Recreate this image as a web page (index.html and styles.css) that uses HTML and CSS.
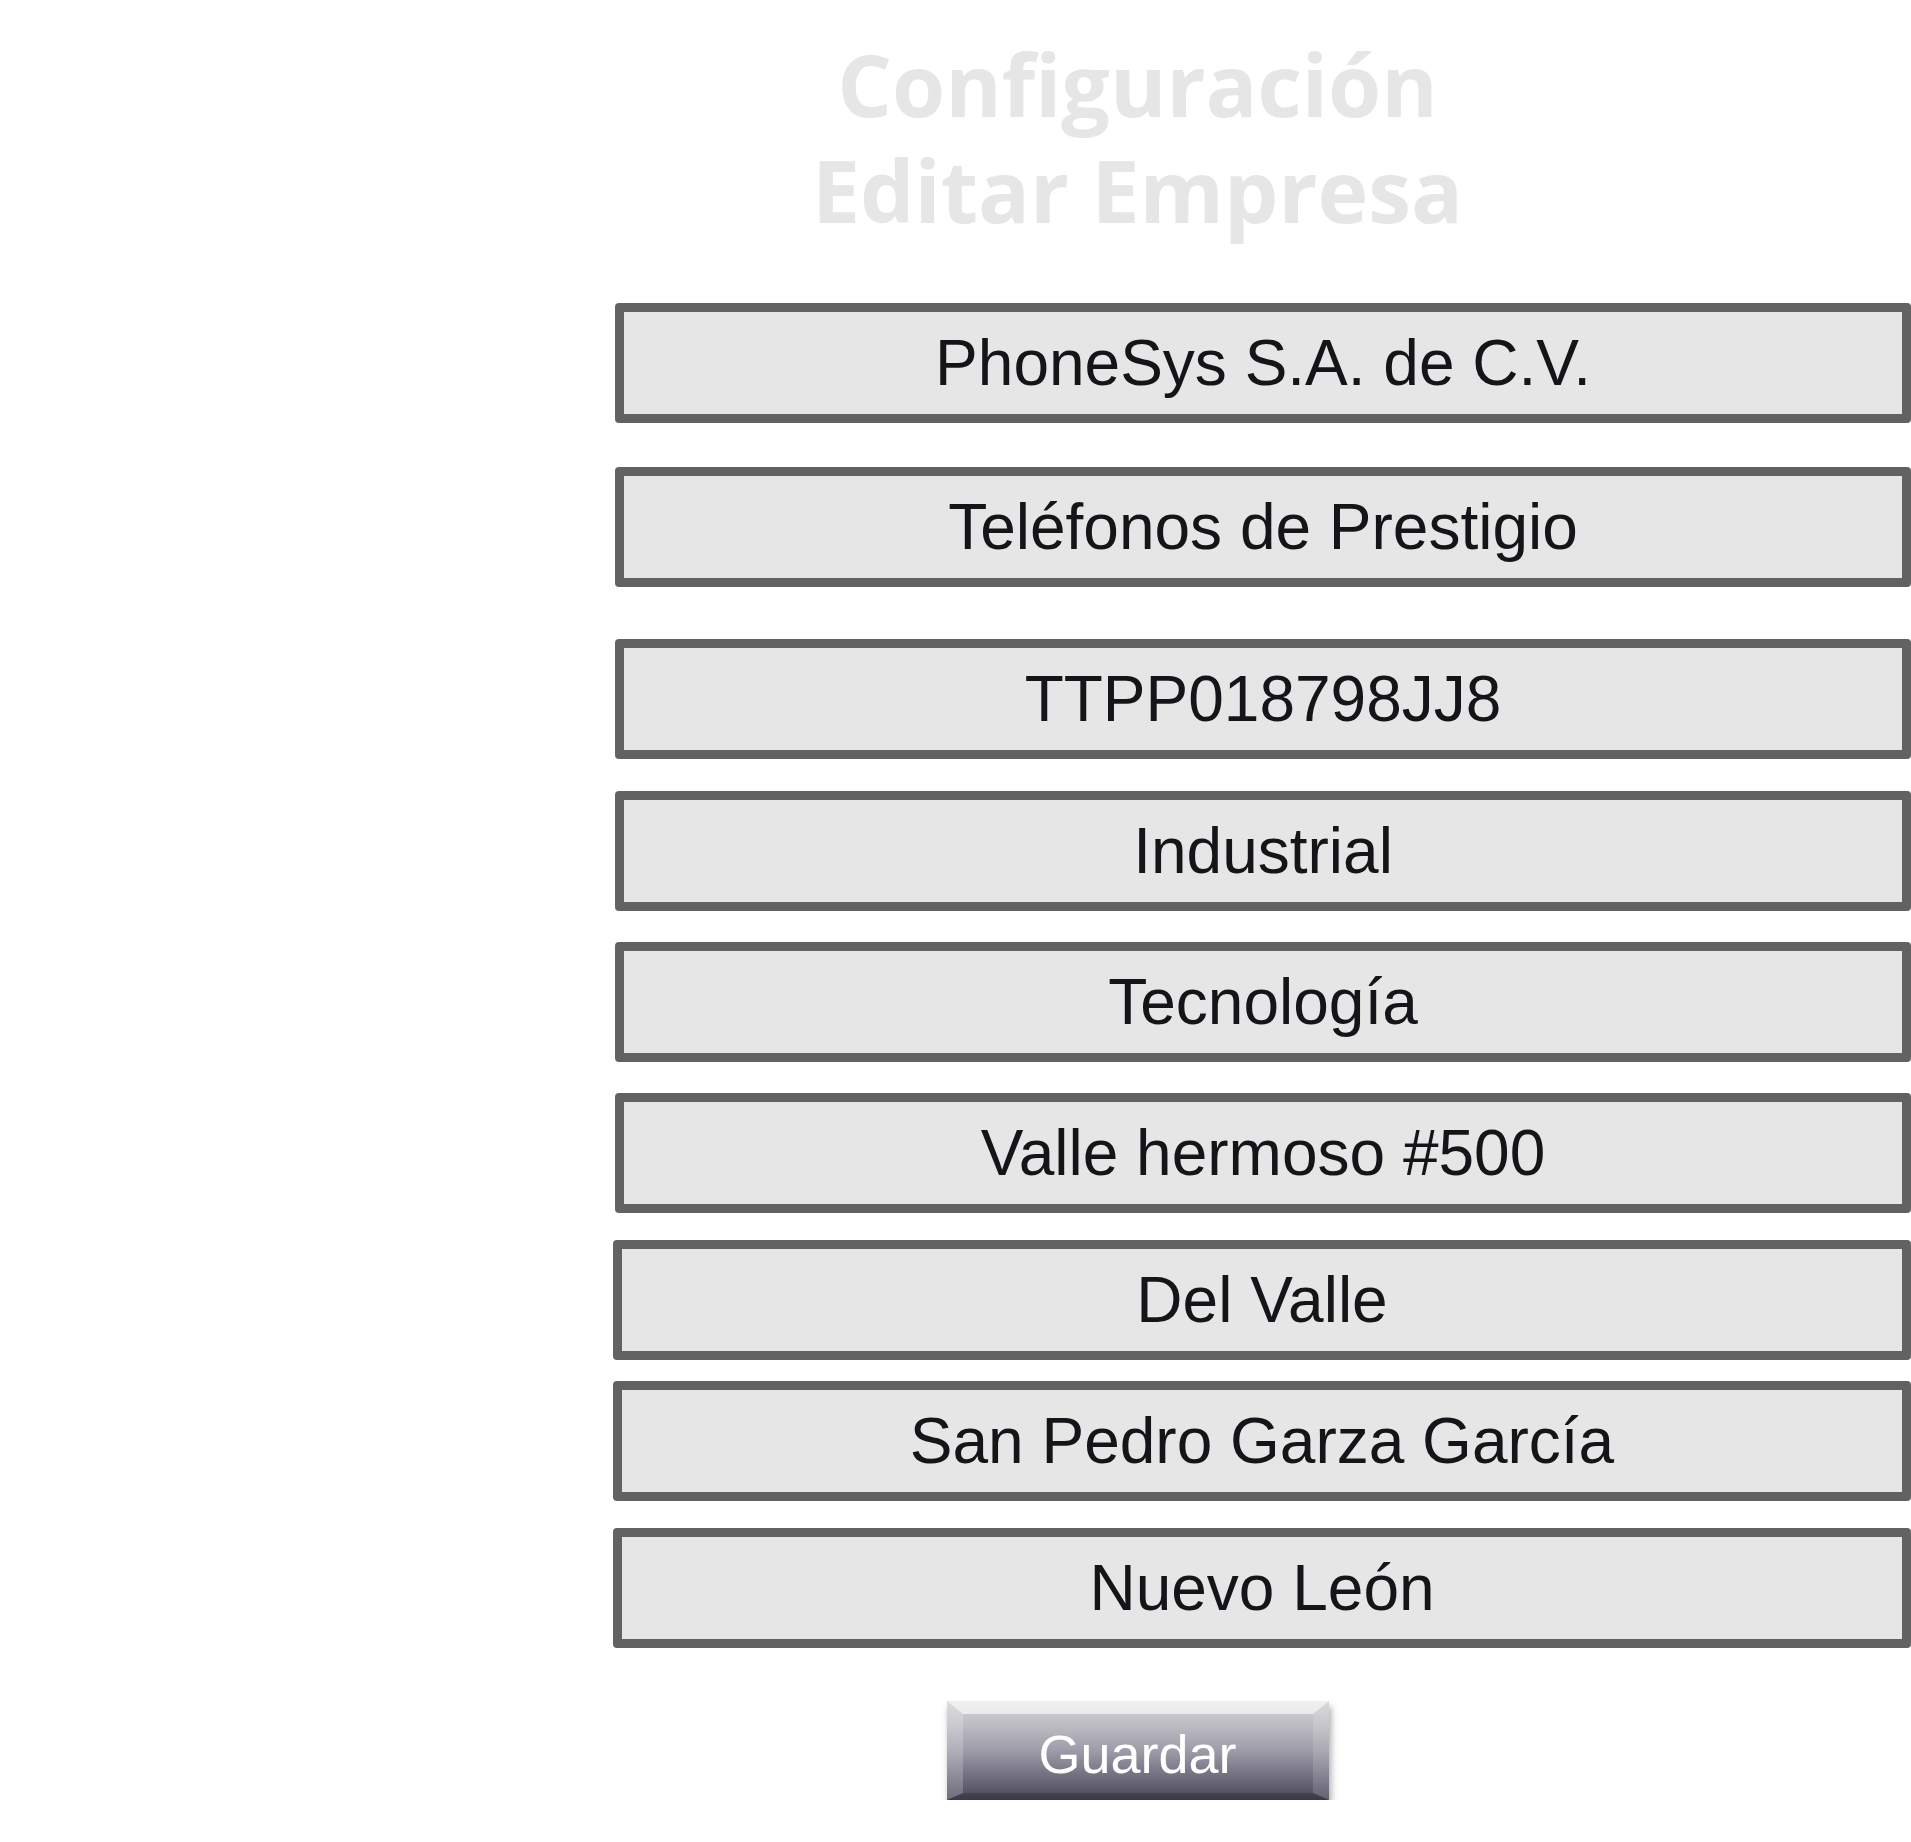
FILE: index.html
```html
<!DOCTYPE html>
<html lang="es">
<head>
<meta charset="utf-8">
<title>Configuración - Editar Empresa</title>
<link rel="stylesheet" href="styles.css">
</head>
<body>
<main class="page">
  <header class="title">
    <h1 class="title__line">Configuración</h1>
    <h2 class="title__line">Editar Empresa</h2>
  </header>
  <form class="form">
    <div class="field field--1">PhoneSys S.A. de C.V.</div>
    <div class="field field--2">Teléfonos de Prestigio</div>
    <div class="field field--3">TTPP018798JJ8</div>
    <div class="field field--4">Industrial</div>
    <div class="field field--5">Tecnología</div>
    <div class="field field--6">Valle hermoso #500</div>
    <div class="field field--7 field--wide">Del Valle</div>
    <div class="field field--8 field--wide">San Pedro Garza García</div>
    <div class="field field--9 field--wide">Nuevo León</div>
    <button type="button" class="save">Guardar</button>
  </form>
</main>
</body>
</html>
```
FILE: styles.css
```css
html, body {
  margin: 0;
  padding: 0;
  background: #ffffff;
}

.page {
  display: flex;
  flex-direction: column;
  padding-left: 364px;
  font-family: "Liberation Sans", Arial, sans-serif;
}

.title {
  padding-top: 31px;
  height: 245px;
  box-sizing: border-box;
  display: flex;
  flex-direction: column;
  align-items: center;
}

.title__line {
  margin: 0;
  font-family: "Open Sans", "Noto Sans", sans-serif;
  font-weight: 700;
  font-size: 86px;
  line-height: 106px;
  color: #e6e6e6;
  white-space: nowrap;
}

.form {
  display: flex;
  flex-direction: column;
  margin-top: 58px;
}

.field {
  box-sizing: border-box;
  height: 120px;
  margin-left: 251px;
  border: 9px solid #626262;
  border-radius: 4px;
  background: #e6e6e6;
  color: #141419;
  font-size: 64px;
  display: flex;
  align-items: center;
  justify-content: center;
  white-space: nowrap;
}

.field--wide { margin-left: 249px; }

.field--2 { margin-top: 44px; }
.field--3 { margin-top: 52px; }
.field--4 { margin-top: 32px; }
.field--5 { margin-top: 31px; }
.field--6 { margin-top: 31px; }
.field--7 { margin-top: 27px; }
.field--8 { margin-top: 21px; }
.field--9 { margin-top: 27px; }

.save {
  align-self: center;
  box-sizing: border-box;
  width: 382px;
  height: 99px;
  margin-top: 53px;
  padding: 0;
  font-family: "Liberation Sans", Arial, sans-serif;
  font-size: 54px;
  color: #ffffff;
  border-style: solid;
  border-width: 13px 16px 7px 16px;
  border-top-color: rgba(255, 255, 255, 0.65);
  border-left-color: rgba(255, 255, 255, 0.2);
  border-right-color: rgba(255, 255, 255, 0.14);
  border-bottom-color: rgba(0, 0, 0, 0.2);
  background: linear-gradient(to bottom, #d4d3d8 0%, #bdbcc3 25%, #9d9ca8 50%, #6e6c7c 78%, #4a4858 100%);
  background-origin: border-box;
  box-shadow: 2px 6px 7px rgba(0, 0, 0, 0.35);
  line-height: 1;
}
```
